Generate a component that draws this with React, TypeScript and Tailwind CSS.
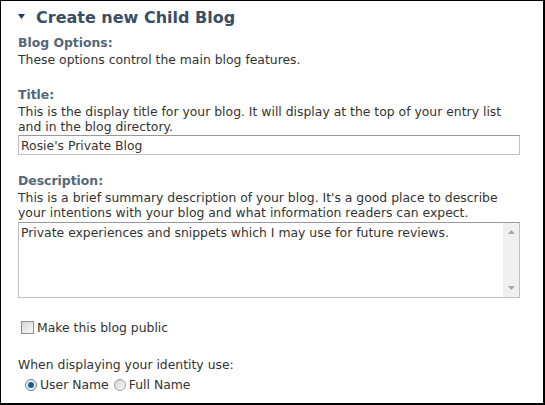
import React from "react";

export default function App() {
  return (
    <div className="w-[545px] h-[405px] bg-white border-l border-t border-r-2 border-b-2 border-black overflow-hidden text-[12.4px] leading-[15px] text-[#333333]" style={{ fontFamily: '"DejaVu Sans", Verdana, sans-serif' }}>
      <div className="pl-[17px] pr-[23px] pt-[6px]">
        <div className="flex items-center h-[20px]">
          <svg width="7" height="5" viewBox="0 0 7 5" className="mt-[-1px]"><polygon points="0,0 7,0 3.5,5" fill="#1f3a6e" /></svg>
          <span className="ml-[11px] text-[16px] font-bold text-[#3b4d63]">Create new Child Blog</span>
        </div>
        <div className="mt-[8px] mb-[2px] font-bold text-[#55667c]">Blog Options:</div>
        <div>These options control the main blog features.</div>

        <div className="mt-[20px] mb-[2px] font-bold text-[#55667c]">Title:</div>
        <div>This is the display title for your blog. It will display at the top of your entry list and in the blog directory.</div>
        <div className="mt-[1px] h-[20px] border border-[#c0c0c0] border-t-[#9a9a9a] px-[2px] flex items-center">Rosie's Private Blog</div>

        <div className="mt-[18px] mb-[2px] font-bold text-[#55667c]">Description:</div>
        <div>This is a brief summary description of your blog. It's a good place to describe your intentions with your blog and what information readers can expect.</div>
        <div className="mt-[2px] h-[76px] border border-[#c0c0c0] border-t-[#9a9a9a] flex">
          <div className="flex-1 px-[2px] pt-[2px]">Private experiences and snippets which I may use for future reviews.</div>
          <div className="w-[16px] bg-[#f0f0f0] flex flex-col justify-between items-center py-[7px]">
            <svg width="7" height="4" viewBox="0 0 7 4"><polygon points="0,4 7,4 3.5,0" fill="#a8a8a8" /></svg>
            <svg width="7" height="4" viewBox="0 0 7 4"><polygon points="0,0 7,0 3.5,4" fill="#a8a8a8" /></svg>
          </div>
        </div>

        <div className="mt-[22px] flex items-center h-[15px]">
          <span className="ml-[3px] w-[13px] h-[13px] border border-[#8f8f8f] bg-gradient-to-br from-[#d8d8d8] to-[#f7f7f7]" />
          <span className="ml-[3px]">Make this blog public</span>
        </div>

        <div className="mt-[22px]">When displaying your identity use:</div>
        <div className="mt-[5px] flex items-center h-[15px]">
          <span className="ml-[7px] w-[12px] h-[12px] rounded-full border border-[#6f7f8f] bg-[#e6edf3] flex items-center justify-center">
            <span className="w-[6px] h-[6px] rounded-full bg-[#1d5c8c]" />
          </span>
          <span className="ml-[3px]">User Name</span>
          <span className="ml-[5px] w-[12px] h-[12px] rounded-full border border-[#a0a0a0] bg-gradient-to-br from-[#d6d6d6] to-[#f8f8f8]" />
          <span className="ml-[3px]">Full Name</span>
        </div>
      </div>
    </div>
  );
}
